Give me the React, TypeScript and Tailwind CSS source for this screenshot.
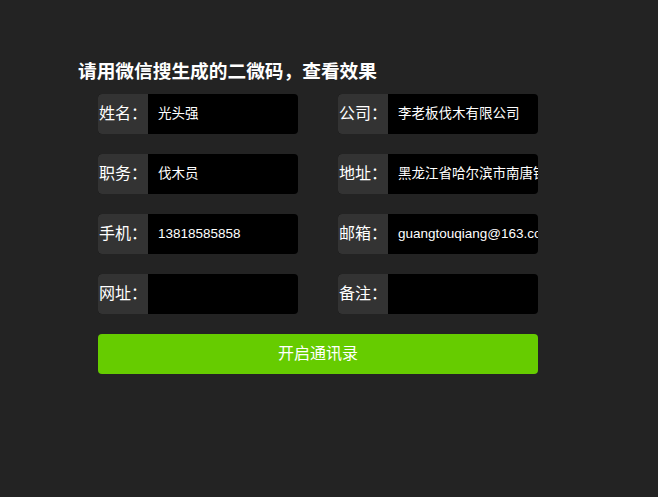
import React from 'react';

const fields: [string, string][] = [
  ['姓名：', '光头强'],
  ['公司：', '李老板伐木有限公司'],
  ['职务：', '伐木员'],
  ['地址：', '黑龙江省哈尔滨市南唐镇伐木场'],
  ['手机：', '13818585858'],
  ['邮箱：', 'guangtouqiang@163.com'],
  ['网址：', ''],
  ['备注：', ''],
];

const Field: React.FC<{ label: string; value: string }> = ({ label, value }) => (
  <div className="flex h-10 w-[200px] overflow-hidden rounded bg-black">
    <div className="flex w-[50px] shrink-0 items-center justify-center whitespace-nowrap bg-[#333333] text-base text-white">
      {label}
    </div>
    <div className="flex flex-1 items-center overflow-hidden whitespace-nowrap pl-2.5 text-[13.5px] text-white">
      {value}
    </div>
  </div>
);

export default function App() {
  return (
    <div
      className="h-[497px] w-full bg-[#232323] pl-[78px] pt-[60px]"
      style={{ fontFamily: '"Liberation Sans", "Noto Sans CJK SC", sans-serif' }}
    >
      <h1 className="h-[34px] text-[18.7px] font-bold leading-6 text-white">请用微信搜生成的二微码，查看效果</h1>
      <div className="w-[460px] pl-5">
        <div className="grid grid-cols-[200px_200px] gap-x-10 gap-y-5">
          {fields.map(([label, value]) => (
            <Field key={label} label={label} value={value} />
          ))}
        </div>
        <button className="mt-5 h-10 w-[440px] rounded bg-[#66cc00] text-base text-white">开启通讯录</button>
      </div>
    </div>
  );
}
